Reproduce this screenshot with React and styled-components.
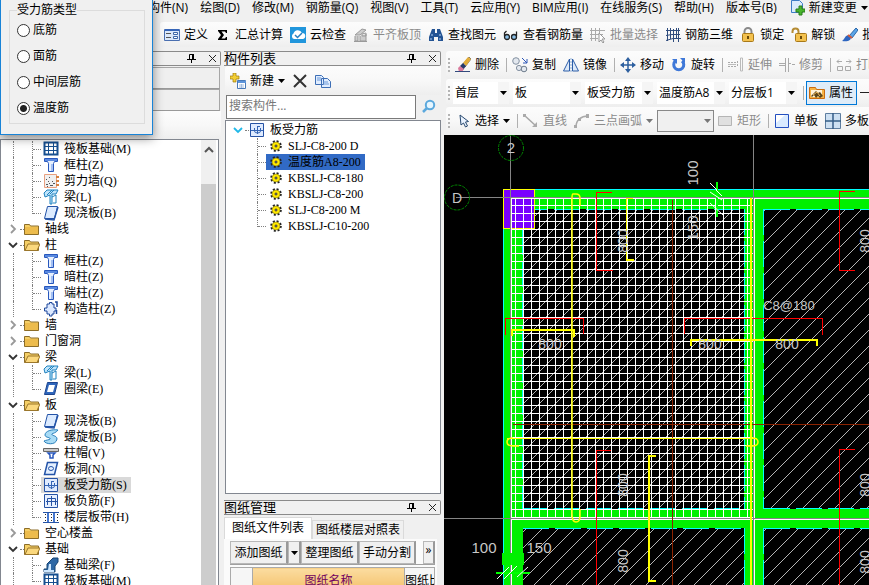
import React, { useState } from 'react'
import styled, { createGlobalStyle } from 'styled-components'

const GlobalStyles = createGlobalStyle`
    * { box-sizing: border-box; }
    body {
        margin: 0;
        overflow: hidden;
        background: #f0f0f0;
        color: #000;
        font: 12px/16px 'Open Sans', 'Noto Sans CJK SC', sans-serif;
    }
    button, input, select, fieldset, table { font: inherit; color: inherit; }
    ul { list-style: none; margin: 0; padding: 0; }
    svg { display: block; flex: none; }
`

// SHELL
const Shell = styled.div`
    display: flex;
    flex-direction: column;
    height: 100vh;
    white-space: nowrap;
`
const MenuBar = styled.nav`
    display: flex;
    flex: none;
    gap: 12px;
    height: 22px;
    padding-left: 148px;
`
const MenuLink = styled.a`
    display: flex;
    gap: 4px;
    height: 16px;
    align-items: center;
    color: #000;
    text-decoration: none;
`
const Workspace = styled.div`
    display: grid;
    grid-template-columns: 221px 217px minmax(0, 1fr);
    gap: 3px;
    flex: 1;
    min-height: 0;
    padding-top: 4px;
`
const Panel = styled.section`
    display: flex;
    flex-direction: column;
    min-height: 0;
    min-width: 0;
`

// TOOLBARS
const Toolbar = styled.div`
    display: flex;
    flex: none;
    align-items: center;
    height: ${p => p.$height || 28}px;
    margin-left: ${p => p.$indent || 0}px;
    padding-left: ${p => p.$pad || 0}px;
    overflow: hidden;
    background: linear-gradient(#fcfcfc, #f8f8f8 50%, #eeeeee);
    border-radius: 3px 0 0 3px;
`
const Grip = styled.span`
    flex: none;
    width: 2px;
    height: 15px;
    margin: 0 2px;
    background: repeating-linear-gradient(#b4b4b4 0 2px, transparent 2px 4px);
`
const ToolButton = styled.button`
    display: flex;
    flex: none;
    align-items: center;
    gap: 4px;
    height: 24px;
    padding: 0 3px 0 2px;
    border: 1px solid ${p => p.$active ? '#0078d7' : 'transparent'};
    background: ${p => p.$active ? '#dfecf8' : 'none'};

    &:disabled { color: #8b8b8b; }
`
const Separator = styled.span`
    flex: none;
    width: 1px;
    height: 14px;
    margin: 0 2px 0 3px;
    background: #b0b0b0;
`
const Combo = styled.span`
    display: flex;
    flex: none;
    align-items: center;
    width: ${p => p.$width}px;
    height: 22px;
    margin: ${p => p.$framed ? 0 : '0 3px 0 1px'};
    border: ${p => p.$framed ? '1px solid #888' : 'none'};
    background: ${p => p.$framed ? '#f0f0f0' : '#fff'};
    color: ${p => p.$framed ? '#777' : '#000'};

    select {
        flex: 1;
        min-width: 0;
        height: 16px;
        padding: 0 0 0 2px;
        border: 0;
        outline: 0;
        appearance: none;
        background: none;
        text-overflow: clip;
        line-height: 16px;
    }
    span {
        display: flex;
        align-items: center;
        justify-content: center;
        align-self: stretch;
        width: 11px;
        background: ${p => p.$framed ? 'none' : '#f5f5f5'};
        pointer-events: none;
    }
`

// PANELS
const TitleBar = styled.header`
    display: flex;
    flex: none;
    align-items: center;
    gap: 12px;
    height: 15px;
    padding-right: 3px;
    border: 1px solid #8a8a8a;
    border-left-width: 0;
    border-radius: 0 2px 2px 0;
    font-size: 13px;
    line-height: 13px;

    h2 {
        flex: 1;
        margin: 0;
        font-size: 13px;
        font-weight: 400;
    }
`
const TitleButton = styled.button`
    display: flex;
    padding: 0;
    border: 0;
    background: none;
`
const SectionButton = styled.button`
    flex: none;
    height: 22px;
    margin-right: 1px;
    border: 1px solid #a6a6a6;
    border-bottom-color: #999;
    background: #efefef;
`
const Sections = styled.div`
    display: flex;
    flex: none;
    flex-direction: column;
    height: 45px;
    padding-top: 1px;
`
const TreeBox = styled.div`
    display: flex;
    flex: 1;
    min-height: 0;
    margin: ${p => p.$margin || '0'};
    border: 1px solid #828790;
    background: #fff;
    overflow: hidden;
    font-family: 'Liberation Serif', 'Noto Sans CJK SC', serif;

    ul { flex: 1; padding-top: 1px; }
`
const ScrollTrack = styled.div`
    flex: none;
    width: 15px;
    margin-right: 2px;
    background: #f0f0f0;
`
const ScrollUp = styled.button`
    display: flex;
    align-items: center;
    justify-content: center;
    width: 100%;
    height: 44px;
    padding: 0 0 24px;
    border: 0;
    background: none;
`
const ScrollThumb = styled.div`
    height: 100%;
    background: #cdcdcd;
`

// TREE
const TreeRow = styled.li`
    display: flex;
    align-items: center;
    height: 16px;
    padding-left: ${p => p.$indent || 0}px;
`
const Stem = styled.span`
    align-self: flex-start;
    width: ${p => p.$width}px;
    height: ${p => p.$last ? 9 : 16}px;
    border-left: 1px dotted #808080;
`
const Branch = styled.span`
    width: ${p => p.$width}px;
    border-top: 1px dotted #808080;
`
const Toggle = styled.button`
    display: flex;
    justify-content: center;
    width: 15px;
    padding: 0;
    border: 0;
    background: none;
`
const Node = styled.span`
    display: flex;
    align-items: center;
    gap: ${p => p.$gap || 5}px;
    height: 16px;
    padding: 0 4px 0 ${p => p.$pad || 0}px;
    background: ${p => p.$fill || 'none'};
`

// COMPONENT LIST
const SearchRow = styled.form`
    display: flex;
    flex: none;
    height: 24px;
    margin: 0 0 1px 2px;

    input {
        flex: 1;
        min-width: 0;
        padding: 0 2px 3px;
        border: 1px solid #7a7a7a;
        border-radius: 0;
        background: #fff;
        outline: 0;
    }
    input::placeholder { color: #777; }
    button {
        display: flex;
        align-items: center;
        justify-content: center;
        width: 25px;
        padding: 0;
        border: 0;
        background: none;
    }
`

// DRAWING FILES
const Tabs = styled.div`
    display: flex;
    flex: none;
    align-items: flex-end;
    height: 22px;
    margin-top: 2px;
`
const Tab = styled.button`
    height: ${p => p.$active ? 22 : 19}px;
    padding: ${p => p.$active ? '0 7px 2px' : '0 3px'};
    border: 1px solid #dadada;
    border-bottom: 0;
    background: ${p => p.$active ? '#fff' : '#f0f0f0'};
`
const TabPage = styled.div`
    height: 46px;
    overflow: hidden;
    margin-right: 4px;
    padding: 2px 2px 0 6px;
    background: #fbfbfb;
`
const ButtonStrip = styled.div`
    display: flex;
    height: 24px;
    margin-bottom: 2px;
    border-bottom: 1px solid #a0a0a0;
`
const StripButton = styled.button`
    display: flex;
    align-items: ${p => p.$top ? 'flex-start' : 'center'};
    justify-content: center;
    width: ${p => p.$width}px;
    margin-left: ${p => p.$push ? 'auto' : 0};
    padding: 0;
    border: 1px solid #b8b8b8;
    border-right: 2px solid #999;
    background: #f0f0f0;
`
const FileTable = styled.table`
    width: 100%;
    border-collapse: collapse;
    table-layout: fixed;

    th {
        height: 22px;
        padding: 5px 0 0;
        overflow: hidden;
        border: 1px solid #aaa;
        background: #f6f6f6;
        font-weight: 400;
        text-align: left;
        line-height: 16px;
    }
    th:first-child { width: 22px; }
    th:nth-child(2) {
        width: 152px;
        background: linear-gradient(#fbdca0, #f5c36e);
        color: #700060;
        text-align: center;
    }
`

const Viewport = styled.main`
    flex: 1;
    min-height: 0;
    background: #000;
    overflow: hidden;

    svg {
        width: 100%;
        height: 100%;
        font-family: 'Liberation Sans', sans-serif;
    }
`

// DIALOG
const Dialog = styled.aside`
    position: absolute;
    top: 0;
    left: 0;
    width: 153px;
    padding: 3px 7px 10px 8px;
    border: 1px solid #1883d7;
    border-top: 0;
    background: #f0f0f0;
    box-shadow: 0 3px 10px rgba(0, 0, 0, .45);

    fieldset {
        margin: 0;
        padding: 0 0 2px 7px;
        border: 1px solid #dcdcdc;
    }
    legend {
        padding: 0;
        line-height: 14px;
    }
`
const RadioLabel = styled.label`
    display: flex;
    align-items: center;
    gap: 3px;
    height: 26px;

    input {
        width: 13px;
        height: 13px;
        margin: 0;
        appearance: none;
        border: 1px solid #333;
        border-radius: 50%;
        background: #fff;
    }
    input:checked {
        background: radial-gradient(circle, #222 0 3px, #fff 4px);
    }
`

// ICONS
const Svg = ({ w = 16, h = 16, children }) => (
    <svg width={w} height={h} viewBox={`0 0 ${w} ${h}`} fill="none">{children}</svg>
)
const Caret = ({ color = '#000' }) => <Svg w={7} h={4}><path d="M0 0h7L3.500 4z" fill={color} /></Svg>

const icons = {
    define: <><path d="M.5 2.500h15v11H.5z" fill="#dce9fb" stroke="#4a6fb0" /><path d="M1 2h14v2H1z" fill="#3766b8" /><path d="M2 6.500h5M2 10.500h5" stroke="#555" /><path d="M9.500 5.500h4v2h-4zM9.500 9.500h4v2h-4z" fill="#fff" stroke="#3d67a8" /></>,
    sigma: <path d="M3 3h9v3h-1l-1-1.500H6.500L9 8l-2.500 3.500H10L11 10h1v3H3v-1l3-4-3-4z" fill="#000" />,
    cloud: <><path d="M0 0h16v16H0z" fill="#2196dc" /><path d="M4 12a3 3 0 0 1-.5-5.500A4.500 4.500 0 0 1 12 6a3 3 0 0 1 .5 6z" fill="#fff" /><path d="m5 8 2.500 2.500L12 6" stroke="#2b7fc0" strokeWidth="1.500" /></>,
    align: <><path d="m2 8 7-6 4 1-6 5zM2 9v5h3V9M7 9v5h6V7" stroke="#999" fill="#ccc" /><path d="M1 14.500h13M9 7l4-1v3H9z" stroke="#999" /></>,
    binoc: <><path d="M4 2h3v4h2V2h3l3 8v4h-5v-4H6v4H1v-4z" fill="#235393" /><path d="M3 8h2M11 8h2M3 11v2M12 11v2" stroke="#b4d2f5" /></>,
    glasses: <><circle cx="4" cy="10" r="2.500" fill="#8cc0e8" stroke="#222" strokeWidth="1.300" /><circle cx="11" cy="10" r="2.500" fill="#8cc0e8" stroke="#222" strokeWidth="1.300" /><path d="M1.500 9V6l2-2M13.500 9V4.500" stroke="#222" strokeWidth="1.300" /></>,
    batch: <><path d="M1.500 1v13M5.500 1v13M9.500 1v7M0 3.500h15M0 7.500h13M0 11.500h8" stroke="#aaa" /><path d="m9 6 6 6h-3l2 3-1 1-2-3-2 2z" fill="#fff" stroke="#999" /></>,
    frame: <path d="M2.500 1v13M8.500 2v13M13.500 1v14M1 3.500h14M1 8.500l6-1h8M1 13.500l7-2h8M5.500 1v11M11.500 1v11" stroke="#2f4c7d" />,
    lock: <><path d="M4.500 7V4.500a3.500 3.500 0 0 1 7 0V7" stroke="#8a8a8a" strokeWidth="2" /><rect x="2.500" y="6.500" width="11" height="8" rx="1" fill="#f3c14e" stroke="#a87918" /><path d="M8 9v3" stroke="#6b4a09" strokeWidth="2" /></>,
    unlock: <><path d="M1.500 6V4.500a3 3 0 0 1 6 0V7" stroke="#b58c34" strokeWidth="2" /><rect x="4.500" y="6.500" width="11" height="8" rx="1" fill="#f3c14e" stroke="#a87918" /><path d="M10 9v3" stroke="#6b4a09" strokeWidth="2" /></>,
    brush: <><path d="m7 9 7-8 2 2-6 8z" fill="#5aa5e8" stroke="#2c67a8" /><path d="M7 8c-4 0-4 4-7 6 5 1 9 0 9-4z" fill="#2d65c0" /><path d="m6 8 4 3" stroke="#d35b3b" strokeWidth="2" /></>,
    eraser: <><path d="m8 7 6-7 2 2-6 8z" fill="#fff" stroke="#777" /><path d="m8 6 5-6 3 2-5 7z" fill="#e2ad3a" /><path d="m5 9 3-3 3 3-3 4z" fill="#263a6b" /><path d="m3 11 2-2 4 3-2 3H4z" fill="#d97a9c" /><path d="M0 14.500h15" stroke="#33497d" /></>,
    copyShape: <><circle cx="4" cy="4" r="3.300" fill="#e3e8ef" stroke="#8390a0" /><circle cx="7" cy="11" r="2.600" fill="#e3e8ef" stroke="#8390a0" /><circle cx="12" cy="12" r="2.800" fill="#e3e8ef" stroke="#6d7a8a" /><path d="m10 1 5 5m0-4v4h-4" stroke="#2c56b8" /></>,
    mirror: <><path d="M6.500 2v12h-6zM9.500 2v12h6z" fill="#dde9f8" stroke="#2d5ea8" /><path d="M8 1v14" stroke="#8fb0d8" strokeDasharray="2 1" /></>,
    move: <><path d="M8 2v12M2 8h12" stroke="#2d5f9f" strokeWidth="1.500" /><path d="m8 0 3 4H5zM8 16l3-4H5zM0 8l4-3v6zM16 8l-4-3v6z" fill="#2d5f9f" /></>,
    rotate: <><path d="M4.500 4A5 5 0 1 0 11 4" stroke="#3f78d8" strokeWidth="3" /><path d="M9 1h5v5zM1 2h5v5z" fill="#3f78d8" /></>,
    extend: <><path d="M0 5.500h8M0 9.500h8M9.500 4v6" stroke="#aaa" strokeDasharray="2 1" /><path d="M12.500 1v13h2V1zM0 7.500h8" stroke="#bbb" /></>,
    trim: <><path d="M6.500 1v14M9.500 1v14M0 6.500h6M10 6.500h2M0 8.500h6M13 7.500h3" stroke="#aaa" /></>,
    breakLine: <><path d="M1 4.500h5M10 4.500h5M3 2.500l-2 2 2 2M13 2.500l2 2-2 2" stroke="#aaa" /><path d="M1.500 9.500h5v4h-5zM9.500 9.500h5v4h-5z" stroke="#aaa" /></>,
    props: <><path d="M.5 2.500h6l1 2h8v9H.5z" fill="#f6b445" stroke="#ca6c10" /><path d="M2 5h11v7H2z" fill="#fff3d8" /><path d="m2 11 5-5 2 2 2-1 3 4-3 2-2-2-2 2-2-3-2 2z" fill="#5c4618" /><path d="m4 10 4-3 3 4" stroke="#f0bc62" /></>,
    pick: <><path d="M0 7.500h10l3-3M10 7.500l3 3" stroke="#222" /></>,
    cursor: <path d="m5 2 1 10 2.500-2 2 4 2-1-2-4 3-.5z" fill="#eaf3ff" stroke="#27486e" />,
    line: <><path d="m1 2 12 11" stroke="#a5a5a5" strokeWidth="1.500" /><path d="M14 14H9l5-5zM0 1h3v3H0z" fill="#aaa" /></>,
    arc: <><path d="M2 14C2 7 7 3 14 3" stroke="#aaa" strokeWidth="1.500" /><path d="M0 12h3v3H0zM4 5h3v3H4zM12 1h3v4h-3z" fill="#aaa" /></>,
    rect: <path d="M1.500 3.500h13v9h-13z" fill="#e0e0e0" stroke="#b5b5b5" />,
    single: <><path d="M1.500 1.500h13v13h-13z" fill="#d9eaff" stroke="#234fc0" /><path d="M2 2h9l-9 8z" fill="#fff" /></>,
    multi: <><path d="M.5 .5h15v15H.5z" fill="#cde0f2" stroke="#5d7d9f" /><path d="M8 0v16M0 8h16" stroke="#355d87" strokeWidth="1.500" /></>,
    newDoc: <><path d="M2.500 .5h8l3 3v9h-11z" fill="#d9eafc" stroke="#3d7cc5" /><path d="M7 9h3V6h3v3h3v3h-3v3h-3v-3H7z" fill="#48b52c" stroke="#2b7e1b" /></>,
    create: <><path d="M3 0h3v3h3v3H6v3H3V6H0V3h3z" fill="#f3ce34" stroke="#9b7a0c" strokeWidth=".7" /><path d="M7.500 7.500h8v8h-8z" fill="#fff" stroke="#4879b8" /><path d="M8 8h8v2H8z" fill="#5d94da" /><path d="M9 12h5M9 14h5M11.500 11v4" stroke="#a1bce0" /></>,
    remove: <path d="m2 2 12 12M14 2 2 14" stroke="#333" strokeWidth="2" />,
    copy: <><path d="M.5 2.500h6l2 2v7h-8zM6.500 5.500h6l3 3v6h-9z" fill="#e0edff" stroke="#3d6eb5" /><path d="M2 5h4M2 7h4M8 9h5M8 11h6" stroke="#6c99d7" /></>,
    search: <><circle cx="9" cy="6" r="4.200" fill="#e6f6ff" stroke="#5ca9dd" strokeWidth="2" /><path d="m6 9-4 4" stroke="#5ca9dd" strokeWidth="2.500" /></>,
    raft: <><path d="M1.500 1.500h13v12h-13z" fill="#fff" stroke="#164f8f" strokeWidth="2" /><path d="M5.500 1v13M10.500 1v13M1 5.500h14M1 9.500h14" stroke="#164f8f" /></>,
    column: <><path d="M1.500 1.500h13v3h-3l-1 2v8h-5v-8l-1-2h-3z" fill="#e6f0ff" stroke="#2757bd" /><path d="M2 2h12v2H2z" fill="#5a8ae0" /><path d="M9 7v7" stroke="#a4c0f2" strokeWidth="2" /></>,
    wall: <><path d="M1.500 1.500h12v13h-12z" fill="#f0f0f0" stroke="#e8a080" /><path d="M3 6.500h1M6 4.500h1M5 8.500h1M3 11.500h2M7 12.500h3M9 8.500h1M6 10.500h1M10 10.500h2M4 13.500h1" stroke="#555" /><path d="M13 4h3M13 8h3M13 12h3" stroke="#d78040" strokeWidth="2" /></>,
    beam: <><path d="m1 4 3-3h11l-2 4H9v10H7V6l-5 2z" fill="#bfe4fb" stroke="#1f82bf" /><path d="m4 6 5-5M9 8l4-2v8h-3M11 1 7 5" stroke="#1f82bf" /></>,
    slab: <><path d="M4.500 1.500h10l-3 12h-10z" fill="#dcebff" stroke="#2454a8" /><path d="m2 14 9 1 4-13" stroke="#2454a8" strokeWidth="1.500" /></>,
    ringBeam: <><path d="M4.500 1.500h10l-3 12h-10z" fill="#2f66bc" stroke="#1d458f" /><path d="M6 4h6l-2 7H4z" fill="#fff" /></>,
    tieColumn: <><path d="M5 3h1.500V1.500H9V3h2v4h2v3h-2v3H9v2H6.500v-2H4v-3H1.500V7H4V3z" fill="#dce9ff" stroke="#1d479b" /><path d="M12 1h2v5M13.500 9v4" stroke="#1d479b" strokeWidth="1.500" /></>,
    spiral: <path d="M15 1C9 0 2 2 2 6c0 3 6 2 5 4-1 1-4 1-6 2 1 3 12 5 13-2 0-4-6-3-5-5 1-1 4-1 6-4z" fill="#a8dbf5" stroke="#2980bd" />,
    cap: <><path d="M.5 3.500h15v3H.5z" fill="#ccc" stroke="#666" /><path d="M5 8h7l-2 2v3H7v-3z" fill="#fff" stroke="#2757bd" strokeWidth="1.500" /></>,
    hole: <><path d="M4.500 1.500h10l-3 12h-10z" fill="#e3efff" stroke="#2454a8" strokeWidth="1.500" /><ellipse cx="8" cy="7.500" rx="2.500" ry="2" stroke="#2454a8" /></>,
    rebar: <><path d="M1.500 1.500h13v13h-13z" fill="#dfebff" stroke="#2653a5" /><path d="M2 8.500h12M8.500 4v8M5.500 6v3q0 2 3 2t3-2V6M8 4.500h3" stroke="#3465b5" /></>,
    negative: <><path d="M1.500 1.500h13v13h-13z" fill="#e8f1ff" stroke="#2653a5" /><path d="M8.500 3v10M3 8.500h11M4.500 12V5.500h8V12" stroke="#2653a5" /></>,
    strip: <><path d="M0 3.500h16M0 13.500h16" stroke="#2653a5" /><path d="M5 4v9M11 4v9" stroke="#4577d0" strokeWidth="2" /><path d="M2.500 5v7M8.500 5v7M14.500 5v7" stroke="#222" strokeDasharray="1 2" /></>,
    footing: <><path d="M1 15v-3h3V7l6-6h5v4l-3 4v6z" fill="#2e68a5" stroke="#174472" /><path d="M1 13h4l1-6h2v6h3v2H1z" fill="#cce7ff" /></>,
}
const Icon = ({ name }) => <Svg>{icons[name]}</Svg>

const Folder = ({ open }) => (
    <Svg>
        <path d="M.5 3.500h5l1 1.500h8v8.500H.5z" fill="#f5cf66" stroke="#8c6d28" />
        {open
            ? <path d="m1 13.500 3-6.500h12l-3 6.500z" fill="#fbd87d" stroke="#9c772b" />
            : <path d="M1 6h13v7H1z" fill="#edbc4d" />}
    </Svg>
)
const Chevron = ({ open, color }) => (
    <Svg w={10} h={10}>
        <path d={open ? 'm1 3 4 4 4-4' : 'm3 1 4 4-4 4'} stroke={color || (open ? '#333' : '#999')} strokeWidth="1.800" />
    </Svg>
)
const Gear = () => (
    <Svg w={12} h={12}>
        <circle cx="6" cy="6" r="4.800" stroke="#222" strokeWidth="2" strokeDasharray="2 1.770" />
        <circle cx="6" cy="6" r="4" fill="#ffe800" stroke="#6b6200" strokeWidth=".5" />
        <circle cx="6" cy="6" r="1" fill="#fff" stroke="#222" />
    </Svg>
)
const Pin = () => <Svg w={9} h={9}><path d="M2.500 5V.5h4V5M0 5.500h9M4.500 5v4" stroke="#000" /><path d="M5 0h2v5H5z" fill="#000" /></Svg>
const Cross = () => <Svg w={9} h={9}><path d="m1 1 7 7M8 1 1 8" stroke="#222" /></Svg>

// DATA
const menus = ['构件(N)', '绘图(D)', '修改(M)', '钢筋量(Q)', '视图(V)', '工具(T)', '云应用(Y)', 'BIM应用(I)', '在线服务(S)', '帮助(H)', '版本号(B)']

const mainTools = [
    ['define', '定义'], ['sigma', '汇总计算'], ['cloud', '云检查'], ['align', '平齐板顶', true],
    ['binoc', '查找图元'], ['glasses', '查看钢筋量'], ['batch', '批量选择', true],
    ['frame', '钢筋三维'], ['lock', '锁定'], ['unlock', '解锁'], ['brush', '批量'],
]
const combos = [
    ['楼层', '首层', 56], ['类别', '板', 68], ['构件类型', '板受力筋', 68],
    ['构件', '温度筋A8', 68], ['分层', '分层板1', 68],
]
const tree = [
    { rows: [['raft', '筏板基础(M)'], ['column', '框柱(Z)'], ['wall', '剪力墙(Q)'], ['beam', '梁(L)'], ['slab', '现浇板(B)']] },
    { name: '轴线' },
    { name: '柱', rows: [['column', '框柱(Z)'], ['column', '暗柱(Z)'], ['column', '端柱(Z)'], ['tieColumn', '构造柱(Z)']] },
    { name: '墙' },
    { name: '门窗洞' },
    { name: '梁', rows: [['beam', '梁(L)'], ['ringBeam', '圈梁(E)']] },
    { name: '板', rows: [['slab', '现浇板(B)'], ['spiral', '螺旋板(B)'], ['cap', '柱帽(V)'], ['hole', '板洞(N)'], ['rebar', '板受力筋(S)'], ['negative', '板负筋(F)'], ['strip', '楼层板带(H)']] },
    { name: '空心楼盖' },
    { name: '基础', rows: [['footing', '基础梁(F)'], ['raft', '筏板基础(M)']] },
]
const rebars = ['SLJ-C8-200 D', '温度筋A8-200', 'KBSLJ-C8-180', 'KBSLJ-C8-200', 'SLJ-C8-200 M', 'KBSLJ-C10-200']
const rebarTypes = ['底筋', '面筋', '中间层筋', '温度筋']

// 8px mesh and 16px diagonal hatch of the slabs
const range = (from, to, step) => Array.from({ length: Math.ceil((to - from) / step) }, (_, i) => from + i * step)
const mesh = range(515.5, 755, 8).map(x => `M${x} 198V519`).join('') + range(205.5, 519, 8).map(y => `M511 ${y}H755`).join('')
const hatch = range(735, 1460, 16).map(sum => `M${sum - 585} 585L${sum - 200} 200`).join('')

const Tool = ({ icon, label, active, disabled, menu }) => (
    <ToolButton type="button" $active={active} disabled={disabled} aria-label={label || icon}>
        <Icon name={icon} />
        {label}
        {menu && <Caret color={disabled ? '#777' : '#000'} />}
    </ToolButton>
)
const Select = ({ label, value, width, framed }) => (
    <Combo $width={width} $framed={framed}>
        <select aria-label={label}><option>{value}</option></select>
        <span><Caret color={framed ? '#777' : '#000'} /></span>
    </Combo>
)
const PanelTitle = ({ children }) => (
    <TitleBar>
        <h2>{children}</h2>
        <TitleButton type="button" aria-label="固定"><Pin /></TitleButton>
        <TitleButton type="button" aria-label="关闭"><Cross /></TitleButton>
    </TitleBar>
)

const TreeGroup = ({ name, rows }) => (
    <>
        {name && (
            <TreeRow $indent={4}>
                <Toggle type="button" aria-label={name}><Chevron open={!!rows} /></Toggle>
                <Branch $width={4} />
                <Node><Folder open={!!rows} />{name}</Node>
            </TreeRow>
        )}
        {(rows || []).map(([icon, label], i) => (
            <TreeRow key={label} $indent={12}>
                <Stem $width={19} />
                <Stem $width={1} $last={i === rows.length - 1} />
                <Branch $width={8} />
                <Node $pad={2} $fill={icon === 'rebar' && '#d9d9d9'}><Icon name={icon} />{label}</Node>
            </TreeRow>
        ))}
    </>
)

const Drawing = () => (
    <svg viewBox="444 135 425 450" preserveAspectRatio="xMinYMin slice" fill="none">
        <defs>
            <clipPath id="slabs">
                <path d="M523 209h221v300H523zM764 209h105v300H764zM523 528h221v57H523zM764 528h105v57H764z" />
            </clipPath>
        </defs>

        <g shapeRendering="crispEdges">
            {/* slab hatching */}
            <path d={hatch} stroke="#b4b4b4" clipPath="url(#slabs)" />

            {/* beams */}
            <path d="M503 189h366v20H503zM503 209h20v376h-20zM744 209h20v376h-20zM523 509h346v19H523z" fill="#00f000" />
            <path d="M503.500 229v356M535 189.500h334" stroke="#0ff" />
            <path d="M522.500 229v280M522 209.500h222M522 508.500h222M744.500 209v300M763.500 209v300M764 209.500h105M764 508.500h105M523 528.500h221M764 528.500h105M744.500 528v57M763.500 528v57" stroke="#0ff" strokeDasharray="26 6" />

            {/* column */}
            <path d="M503.500 189.500h31v39h-31z" fill="#7a00ff" stroke="#ff0" />

            {/* temperature mesh */}
            <path d={mesh} stroke="#fff" />
            <path d="M511.500 198v387M754.500 198v387M511 198.500h358M511 519.500h358" stroke="#fff" />

            {/* axes */}
            <path d="M510.500 135v450M753.500 135v450M456 197.500h413M444 518.500h425" stroke="#858585" />
            <path d="M513 424.500h356M672.500 200v385" stroke="#8c2200" />

            {/* bars */}
            <path d="M612 192.500h-15.500v78H613M505.500 335v-16.500H583.500v15M684.500 334v-15.500H822.500v16M855 191.500h-15.500v79H855M611 450.500h-14.500V585M855 449.500h-15.500V585" stroke="#f00" />
            <path d="M633 198.500h-6.500V260" stroke="#ff0" />
            <path d="M626 260h8M512 336v-6h62v7M691 346v-6h126v6M656 456h-7v125h7" stroke="#ff0" strokeWidth="2" />
            <path d="M751 198v387" stroke="#ff0" strokeWidth="2" />
            <path d="M507 438.500h250" stroke="#ff0" />
        </g>
        <path d="M580 206v-8q0-4-4-4h-3q-1 0-1 4v316q0 8 4 8t4-6v-7M513 438q-6 0-6 4t6 4h6M752 438q6 0 6 4t-6 4h-6" stroke="#ff0" strokeWidth="1.500" />

        {/* dimension ticks */}
        <path d="M717 182v35M496 573h34" stroke="#0f0" strokeWidth="2" />
        <path d="M502 553h22v12h-22z" fill="#00f000" />
        <path d="m710 183 7 7M710 192l12 8M716 190l6 6M710 203l13 12M497 579l12-12M504 579l13-13M517 577l11-10" stroke="#fff" />

        {/* axis bubbles */}
        <g stroke="#008400" strokeDasharray="3 1">
            <circle cx="511" cy="148" r="12.500" />
            <circle cx="457" cy="197.500" r="12.500" />
        </g>
        <g fill="#c8c8c8" fontSize="14" textAnchor="middle">
            <text x="511" y="153" fontSize="15">2</text>
            <text x="457" y="203">D</text>
            <text x="550" y="349">800</text>
            <text x="710" y="349">800</text>
            <text x="787" y="349">800</text>
            <text x="789" y="310" fontSize="13">C8@180</text>
            <text x="484" y="553" fontSize="15">100</text>
            <text x="539" y="553" fontSize="15">150</text>
            <text transform="translate(698 173) rotate(-90)" fontSize="15">100</text>
            <text transform="translate(698 228) rotate(-90)" fontSize="15">150</text>
            <text transform="translate(628 241) rotate(-90)">800</text>
            <text transform="translate(628 485) rotate(-90)">800</text>
            <text transform="translate(628 561) rotate(-90)">800</text>
            <text transform="translate(870 241) rotate(-90)">800</text>
            <text transform="translate(870 485) rotate(-90)">800</text>
            <text transform="translate(870 562) rotate(-90)">800</text>
        </g>
    </svg>
)

const App = () => {
    const [type, setType] = useState('温度筋')

    return (
        <Shell>
            <GlobalStyles />
            <MenuBar>
                {menus.map(m => <MenuLink key={m} href="#">{m}</MenuLink>)}
                <MenuLink href="#"><Icon name="newDoc" />新建变更<Caret /></MenuLink>
            </MenuBar>
            <Toolbar $height={25} $indent={160} $pad={1}>
                {mainTools.map(([icon, label, off]) => (
                    <Tool key={icon} icon={icon} label={label} disabled={off} />
                ))}
            </Toolbar>

            <Workspace>
                <Panel>
                    <PanelTitle />
                    <Sections>
                        <SectionButton type="button" aria-label="工程设置" />
                        <SectionButton type="button" aria-label="绘图输入" />
                    </Sections>
                    <Toolbar $height={28} />
                    <TreeBox $margin="0 2px -1px 0">
                        <ul>
                            {tree.map((g, i) => <TreeGroup key={i} {...g} />)}
                        </ul>
                        <ScrollTrack>
                            <ScrollUp type="button" aria-label="向上滚动">
                                <Svg w={10} h={8}><path d="m1 6 4-4 4 4" stroke="#555" strokeWidth="2" /></Svg>
                            </ScrollUp>
                            <ScrollThumb />
                        </ScrollTrack>
                    </TreeBox>
                </Panel>

                <Panel>
                    <PanelTitle>构件列表</PanelTitle>
                    <Toolbar $height={29} $indent={1} $pad={2}>
                        <Tool icon="create" label="新建" menu />
                        <Tool icon="remove" />
                        <Tool icon="copy" />
                    </Toolbar>
                    <SearchRow>
                        <input aria-label="搜索构件" placeholder="搜索构件..." />
                        <button type="button" aria-label="搜索"><Icon name="search" /></button>
                    </SearchRow>
                    <TreeBox $margin="0 0 6px 1px">
                        <ul>
                            <TreeRow $indent={4}>
                                <Toggle type="button" aria-label="板受力筋"><Chevron open color="#20b8e8" /></Toggle>
                                <Branch $width={4} />
                                <Node><Icon name="rebar" />板受力筋</Node>
                            </TreeRow>
                            {rebars.map((name, i) => (
                                <TreeRow key={name} $indent={31}>
                                    <Stem $width={1} $last={i === rebars.length - 1} />
                                    <Branch $width={8} />
                                    <Node $pad={4} $gap={6} $fill={i === 1 && '#316ac5'}><Gear />{name}</Node>
                                </TreeRow>
                            ))}
                        </ul>
                    </TreeBox>
                    <PanelTitle>图纸管理</PanelTitle>
                    <Tabs>
                        <Tab type="button" $active>图纸文件列表</Tab>
                        <Tab type="button">图纸楼层对照表</Tab>
                    </Tabs>
                    <TabPage>
                        <ButtonStrip>
                            <StripButton type="button" $width={58}>添加图纸</StripButton>
                            <StripButton type="button" $width={13} aria-label="更多添加方式"><Caret /></StripButton>
                            <StripButton type="button" $width={58}>整理图纸</StripButton>
                            <StripButton type="button" $width={57}>手动分割</StripButton>
                            <StripButton type="button" $width={12} $push $top>»</StripButton>
                        </ButtonStrip>
                        <FileTable>
                            <thead>
                                <tr>
                                    <th aria-label="序号" />
                                    <th>图纸名称</th>
                                    <th>图纸比例</th>
                                </tr>
                            </thead>
                        </FileTable>
                    </TabPage>
                </Panel>

                <Panel>
                    <Toolbar $indent={2}>
                        <Grip />
                        <Tool icon="eraser" label="删除" />
                        <Separator />
                        <Tool icon="copyShape" label="复制" />
                        <Tool icon="mirror" label="镜像" />
                        <Separator />
                        <Tool icon="move" label="移动" />
                        <Tool icon="rotate" label="旋转" />
                        <Separator />
                        <Tool icon="extend" label="延伸" disabled />
                        <Tool icon="trim" label="修剪" disabled />
                        <Separator />
                        <Tool icon="breakLine" label="打断" disabled />
                    </Toolbar>
                    <Toolbar $indent={2}>
                        <Grip />
                        {combos.map(([label, value, width]) => (
                            <Select key={label} label={label} value={value} width={width} />
                        ))}
                        <Separator />
                        <Tool icon="props" label="属性" active />
                        <Tool icon="pick" />
                    </Toolbar>
                    <Toolbar $indent={2}>
                        <Grip />
                        <Tool icon="cursor" label="选择" menu />
                        <Separator />
                        <Tool icon="line" label="直线" disabled />
                        <Tool icon="arc" label="三点画弧" disabled menu />
                        <Select label="绘制方式" value="" width={57} framed />
                        <Tool icon="rect" label="矩形" disabled />
                        <Separator />
                        <Tool icon="single" label="单板" />
                        <Tool icon="multi" label="多板" />
                    </Toolbar>
                    <Viewport><Drawing /></Viewport>
                </Panel>
            </Workspace>

            <Dialog>
                <fieldset>
                    <legend>受力筋类型</legend>
                    {rebarTypes.map(t => (
                        <RadioLabel key={t}>
                            <input type="radio" name="rebarType" checked={type === t} onChange={() => setType(t)} />
                            {t}
                        </RadioLabel>
                    ))}
                </fieldset>
            </Dialog>
        </Shell>
    )
}

export default App
